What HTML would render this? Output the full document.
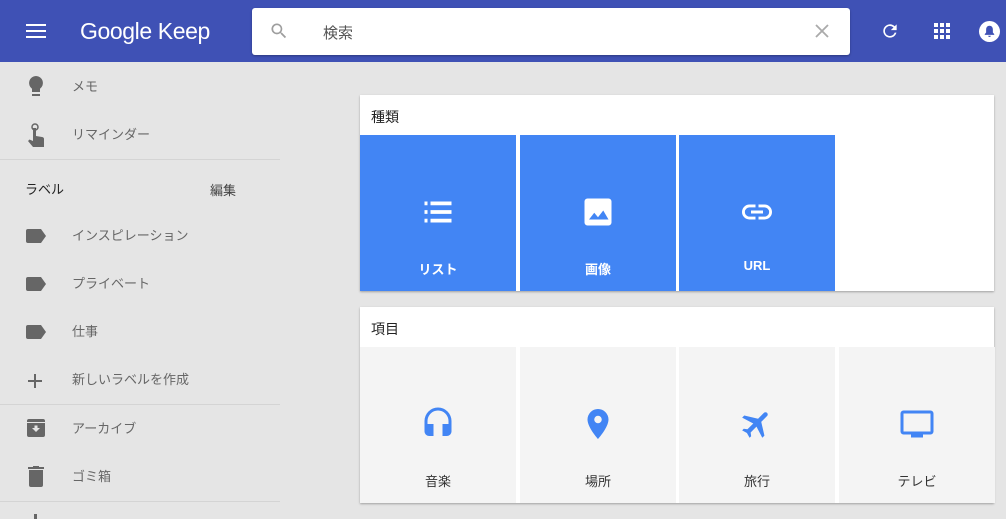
<!DOCTYPE html>
<html><head><meta charset="utf-8"><style>
*{margin:0;padding:0;box-sizing:border-box}
body{width:1006px;height:519px;overflow:hidden;background:#e5e5e5;font-family:"Liberation Sans","Noto Sans CJK JP",sans-serif;position:relative}
.hdr{position:absolute;left:0;top:0;width:1006px;height:62px;background:#3f51b5}
.abs{position:absolute}
.search{left:252px;top:8px;width:598px;height:47px;background:#fff;border-radius:3px;box-shadow:0 1px 2px rgba(0,0,0,.3)}
.logo{left:80px;top:18px;color:#fff;font-size:23px;letter-spacing:-.4px}
.item{position:absolute;left:72px;font-size:13px;color:#666}
.ic{position:absolute;left:26px}
.hr{position:absolute;left:0;width:280px;height:1px;background:#d4d4d4}
.card{position:absolute;left:360px;width:634px;height:196px;background:#fff;box-shadow:0 1px 2px rgba(0,0,0,.3)}
.ct{position:absolute;left:11px;top:12px;font-size:14px;color:#222}
.tile{position:absolute;top:40px;width:156px;height:156px}
.tile .lb{position:absolute;left:0;width:100%;text-align:center;font-size:13px}
.tile svg{position:absolute;left:60px;top:59px}
.b{background:#4285f4;color:#fff}
.b .lb{top:124px;font-weight:bold}
.g{background:#f4f4f4;color:#333}
.g .lb{top:124px}
</style></head><body>
<div class="hdr"></div>
<svg class="abs" style="left:26px;top:23px" width="20" height="16"><rect y="1" width="20" height="2" fill="#fff"/><rect y="7" width="20" height="2" fill="#fff"/><rect y="13" width="20" height="2" fill="#fff"/></svg>
<div class="abs logo">Google Keep</div>
<div class="abs search">
<svg class="abs" style="left:17px;top:13px" width="20" height="20" viewBox="0 0 24 24"><path fill="#9e9e9e" d="M15.5 14h-.8l-.3-.3A6.5 6.5 0 1 0 9.5 16a6.5 6.5 0 0 0 4.2-1.6l.3.3v.8l5 5 1.5-1.5-5-5zm-6 0A4.5 4.5 0 1 1 14 9.5 4.5 4.5 0 0 1 9.5 14z"/></svg>
<div class="abs" style="left:71px;top:14px;font-size:15px;color:#555">検索</div>
<svg class="abs" style="left:562px;top:15px" width="16" height="16"><path d="M2 2L14 14M14 2L2 14" stroke="#aaa" stroke-width="1.8"/></svg>
</div>
<svg class="abs" style="left:880px;top:21px" width="20" height="20" viewBox="0 0 24 24"><path fill="#fff" d="M17.65 6.35A8 8 0 1 0 19.7 14h-2.1a6 6 0 1 1-1.4-6.2L13 11h7V4z"/></svg>
<svg class="abs" style="left:934px;top:23px" width="16" height="16"><g fill="#fff"><rect x="0" y="0" width="4" height="4"/><rect x="6" y="0" width="4" height="4"/><rect x="12" y="0" width="4" height="4"/><rect x="0" y="6" width="4" height="4"/><rect x="6" y="6" width="4" height="4"/><rect x="12" y="6" width="4" height="4"/><rect x="0" y="12" width="4" height="4"/><rect x="6" y="12" width="4" height="4"/><rect x="12" y="12" width="4" height="4"/></g></svg>
<svg class="abs" style="left:979px;top:21px" width="21" height="21" viewBox="0 0 20 20"><circle cx="10" cy="10" r="10" fill="#fff"/><path fill="#3f51b5" d="M10 4.5c-2 0-3.2 1.5-3.2 3.5v3L5.5 12.5v.7h9v-.7L13.2 11V8c0-2-1.2-3.5-3.2-3.5zM8.8 14h2.4a1.2 1.2 0 0 1-2.4 0z"/></svg>

<svg class="ic" style="top:75px" width="20" height="24" viewBox="0 0 20 24"><path fill="#666" d="M10 1a7 7 0 0 0-4 12.7V17h8v-3.3A7 7 0 0 0 10 1z"/><rect x="6" y="19" width="8" height="2" fill="#666"/></svg>
<div class="item" style="top:76px">メモ</div>
<svg class="ic" style="top:122px" width="22" height="26" viewBox="0 0 22 26"><circle cx="9" cy="5" r="3" fill="none" stroke="#666" stroke-width="1.5"/><path fill="#666" d="M7 6h3v8l6 1c1.5.3 2 1 2 2v8H7l-5-6 1.5-1.5L7 19z"/></svg>
<div class="item" style="top:124px">リマインダー</div>
<div class="hr" style="top:159px"></div>
<div class="abs" style="left:25px;top:179px;font-size:13px;color:#222">ラベル</div>
<div class="abs" style="left:210px;top:180px;font-size:13px;color:#444">編集</div>
<svg class="ic" style="top:229px" width="20" height="14"><path fill="#666" d="M2 0h13l5 7-5 7H2a2 2 0 0 1-2-2V2a2 2 0 0 1 2-2z"/></svg>
<div class="item" style="top:225px">インスピレーション</div>
<svg class="ic" style="top:277px" width="20" height="14"><path fill="#666" d="M2 0h13l5 7-5 7H2a2 2 0 0 1-2-2V2a2 2 0 0 1 2-2z"/></svg>
<div class="item" style="top:273px">プライベート</div>
<svg class="ic" style="top:325px" width="20" height="14"><path fill="#666" d="M2 0h13l5 7-5 7H2a2 2 0 0 1-2-2V2a2 2 0 0 1 2-2z"/></svg>
<div class="item" style="top:321px">仕事</div>
<svg class="ic" style="top:372px" width="18" height="18"><path d="M9 2V16M2 9H16" stroke="#666" stroke-width="2"/></svg>
<div class="item" style="top:369px">新しいラベルを作成</div>
<div class="hr" style="top:404px"></div>
<svg class="ic" style="top:418px" width="20" height="20" viewBox="0 0 20 20"><rect x="1" y="1" width="18" height="18" rx="2" fill="#666"/><rect x="1" y="4" width="18" height="1" fill="#e5e5e5"/><path fill="#e5e5e5" d="M6 10h2.5V7.5h3V10H14l-4 4z"/></svg>
<div class="item" style="top:418px">アーカイブ</div>
<svg class="ic" style="top:466px" width="20" height="22" viewBox="0 0 20 22"><rect x="2" y="1" width="16" height="2" fill="#666"/><rect x="7" y="0" width="6" height="2" fill="#666"/><path fill="#666" d="M3 4h14v15a2 2 0 0 1-2 2H5a2 2 0 0 1-2-2z"/></svg>
<div class="item" style="top:466px">ゴミ箱</div>
<div class="hr" style="top:501px"></div>
<div class="abs" style="left:34px;top:514px;width:3px;height:5px;background:#666"></div>

<div class="card" style="top:95px">
<div class="ct">種類</div>
<div class="tile b" style="left:0"><svg width="36" height="36" viewBox="0 0 24 24"><path fill="#fff" d="M3 5h2v2.5H3zm4 0h14v2.5H7zM3 10.75h2v2.5H3zm4 0h14v2.5H7zM3 16.5h2V19H3zm4 0h14V19H7z"/></svg><div class="lb">リスト</div></div>
<div class="tile b" style="left:160px"><svg width="36" height="36" viewBox="0 0 24 24"><path fill="#fff" d="M19 3H5a2 2 0 0 0-2 2v14a2 2 0 0 0 2 2h14a2 2 0 0 0 2-2V5a2 2 0 0 0-2-2zM6 17l3.5-4.5 2.5 3 3.5-4.5L19 17z"/></svg><div class="lb">画像</div></div>
<div class="tile b" style="left:319px"><svg width="36" height="36" viewBox="0 0 24 24"><path fill="#fff" d="M3.9 12a3.1 3.1 0 0 1 3.1-3.1h4V7H7a5 5 0 0 0 0 10h4v-1.9H7A3.1 3.1 0 0 1 3.9 12zM8 13h8v-2H8zm9-6h-4v1.9h4a3.1 3.1 0 0 1 0 6.2h-4V17h4a5 5 0 0 0 0-10z"/></svg><div class="lb" style="top:123px">URL</div></div>
</div>

<div class="card" style="top:307px">
<div class="ct">項目</div>
<div class="tile g" style="left:0"><svg width="36" height="36" viewBox="0 0 24 24"><path fill="#4285f4" d="M12 1a9 9 0 0 0-9 9v7a3 3 0 0 0 3 3h3v-8H5v-2a7 7 0 0 1 14 0v2h-4v8h3a3 3 0 0 0 3-3v-7a9 9 0 0 0-9-9z"/></svg><div class="lb">音楽</div></div>
<div class="tile g" style="left:160px"><svg width="36" height="36" viewBox="0 0 24 24"><path fill="#4285f4" d="M12 2a7 7 0 0 0-7 7c0 5.25 7 13 7 13s7-7.75 7-13a7 7 0 0 0-7-7zm0 9.5A2.5 2.5 0 1 1 12 6.5a2.5 2.5 0 0 1 0 5z"/></svg><div class="lb">場所</div></div>
<div class="tile g" style="left:319px"><svg width="36" height="36" viewBox="0 0 24 24"><path fill="#4285f4" d="M21 16v-2l-8-5V3.5a1.5 1.5 0 0 0-3 0V9l-8 5v2l8-2.5V19l-2 1.5V22l3.5-1 3.5 1v-1.5L13 19v-5.5z" transform="rotate(45 12 12)"/></svg><div class="lb">旅行</div></div>
<div class="tile g" style="left:479px"><svg width="36" height="36" viewBox="0 0 24 24"><path fill="#4285f4" d="M21 3H3a2 2 0 0 0-2 2v12a2 2 0 0 0 2 2h5v2h8v-2h5a2 2 0 0 0 2-2V5a2 2 0 0 0-2-2zm0 14H3V5h18z"/></svg><div class="lb">テレビ</div></div>
</div>
</body></html>
